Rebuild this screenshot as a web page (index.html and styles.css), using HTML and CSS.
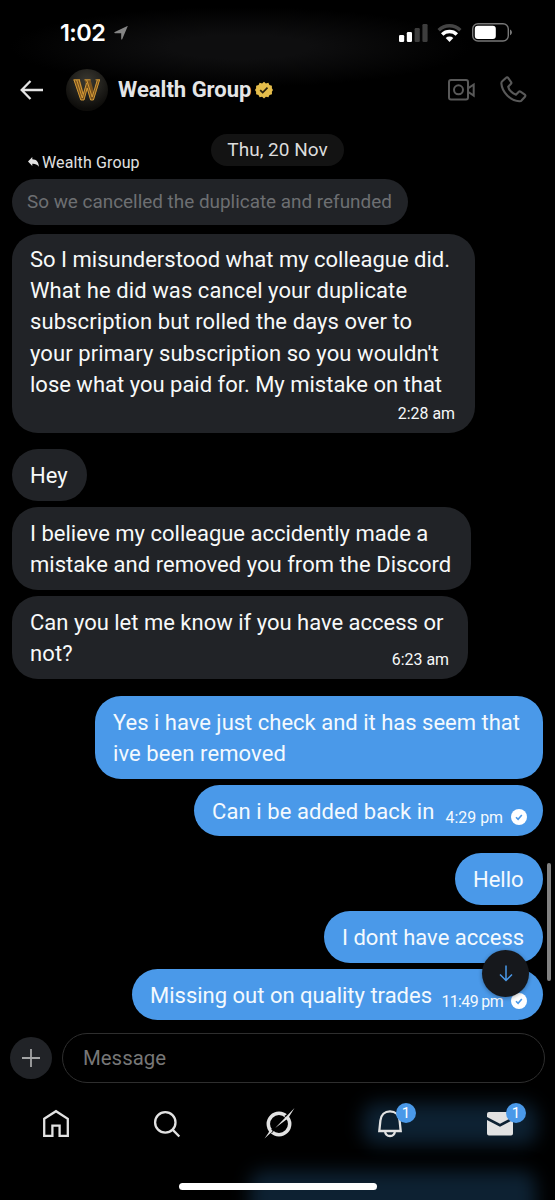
FILE: index.html
```html
<!DOCTYPE html>
<html lang="en">
<head>
<meta charset="utf-8">
<title>Wealth Group</title>
<link rel="stylesheet" href="styles.css">
</head>
<body>
<div class="phone">
  <header class="top">
    <div class="status">
      <span class="clock">1:02</span>
      <svg class="loc" width="14" height="14" viewBox="0 0 14 14"><path d="M13.6.5 8.2 13.2c-.3.500-1 .4-1-.3V7.2H1c-.8 0-.9-.8-.2-1.1L12.900.2c.5-.2.9-.1.700.3z" fill="#858585"/></svg>
      <svg class="signal" width="30" height="18" viewBox="0 0 30 18"><rect x="0" y="11" width="5.200" height="7" rx="1.300" fill="#fff"/><rect x="7.800" y="8" width="5.200" height="10" rx="1.300" fill="#fff"/><rect x="15.600" y="4" width="5.200" height="14" rx="1.300" fill="#3d3d3d"/><rect x="23.400" y="0" width="5.200" height="18" rx="1.300" fill="#3d3d3d"/></svg>
      <svg class="wifi" width="25" height="18" viewBox="0 0 25 18"><path d="M1.700 6.200a15.500 15.500 0 0 1 21.600 0" fill="none" stroke="#444" stroke-width="3.500"/><path d="M5.200 10.400a10.500 10.500 0 0 1 14.600 0" fill="none" stroke="#fff" stroke-width="3.500"/><path d="M12.500 18 8.700 14.100a5.600 5.600 0 0 1 7.600 0z" fill="#fff"/></svg>
      <svg class="battery" width="41" height="19" viewBox="0 0 41 19"><rect x=".7" y=".7" width="35.600" height="17.300" rx="5.300" fill="none" stroke="#777" stroke-width="1.400"/><rect x="2.800" y="2.700" width="21" height="13.200" rx="3" fill="#fff"/><path d="M38 6.500c2.600 1 2.600 4.800 0 5.800z" fill="#777"/></svg>
    </div>
    <div class="title-bar">
      <svg class="back" width="24" height="20" viewBox="0 0 24 20" fill="none" stroke="#e4e4e4" stroke-width="2.300"><path d="M23 10H2M10.500 1 1.700 10l8.800 9"/></svg>
      <svg class="avatar" width="42" height="42" viewBox="0 0 42 42">
        <defs><radialGradient id="av" cx=".5" cy=".3" r=".65"><stop offset="0" stop-color="#3b3932"/><stop offset=".55" stop-color="#22211d"/><stop offset="1" stop-color="#0d0c0a"/></radialGradient></defs>
        <circle cx="21" cy="21" r="21" fill="url(#av)"/>
        <path d="M7.500 10.500h6.500l3.500 13 2.500-8-1.500-5h6l3.500 13 3-13h3L27.700 31h-3.200L21 20.500 18 31h-3.200z" fill="#7a521c"/>
        <g fill="none" stroke="#dca23a" stroke-width=".9"><path d="M7.500 10.800H14M18.500 10.800h6M29.500 10.800H34"/><path d="m8 11 6.800 20H18l3.200-12 3.400 12h2.800L33.500 11"/><path d="m10.700 11 5.600 18 4.200-15M31.300 11l-5.100 17-5.500-17"/><path d="m13.200 11 3.800 14"/></g>
      </svg>
      <h1 class="name">Wealth Group</h1>
      <svg class="verified" width="18" height="18" viewBox="0 0 18 18"><path d="m9 .7 1.900 1.700 2.500-.6 1 2.300 2.500.6v2.600L18 9l-1.100 1.800.1 2.500-2.500.7-1.100 2.300-2.500-.6L9 17.400l-1.900-1.700-2.500.6-1.100-2.300-2.400-.7V10.800L0 9l1.100-1.700V4.700l2.500-.6 1-2.300 2.500.6z" fill="#e5bd4b"/><path d="m5.200 9.100 2.500 2.500 4.800-5" fill="none" stroke="#28200c" stroke-width="1.700"/></svg>
      <svg class="video" width="27" height="22" viewBox="0 0 27 22" fill="none" stroke="#595959" stroke-width="2"><rect x="1" y="1" width="19" height="19.500" rx="2"/><circle cx="10.500" cy="10.800" r="4.500"/><path d="M20 9.300 25.700 5.500v11.200L20 12.800z"/></svg>
      <svg class="call" width="27" height="27" viewBox="0 0 27 27" fill="none" stroke="#595959" stroke-width="2.100" stroke-linejoin="round"><path d="M2.200 5.300 6.100 1.700c.6-.6 1.500-.5 2 .2l3 4.200c.4.600.4 1.200-.1 1.700L8.200 10.700c.6 3.200 4.300 7 7.700 8l2.900-2.900c.5-.5 1.100-.5 1.700-.1l4.300 3c.7.500.8 1.400.2 2l-3.300 3.600c-.6.800-1.500 1-2.500.9C10.500 25 2 16 1.400 7.700c-.1-1 .1-1.800.8-2.400z"/></svg>
    </div>
  </header>

  <main class="thread">
    <div class="meta">
      <div class="reply"><svg width="11" height="10" viewBox="0 0 11 10"><path d="M4.300 0v2.300C8.500 2.300 10.600 5 10.900 9.800 9 7.300 7.300 6.700 4.300 6.800V9L0 4.500z" fill="#e1e1e1"/></svg><span>Wealth Group</span></div>
      <div class="date">Thu, 20 Nov</div>
    </div>
    <div class="quote">So we cancelled the duplicate and refunded</div>
    <div class="bubble in b-long"><p><span>So I misunderstood what my colleague did.</span><span class="wide">What he did was cancel your duplicate</span><span class="wide">subscription but rolled the days over to</span><span class="wide">your primary subscription so you wouldn't</span><span>lose what you paid for. My mistake on that</span></p><time class="below">2:28 am</time></div>
    <div class="bubble in b-hey gap"><p>Hey</p></div>
    <div class="bubble in b-believe"><p><span>I believe my colleague accidently made a</span><span class="snug">mistake and removed you from the Discord</span></p></div>
    <div class="bubble in b-access"><p><span>Can you let me know if you have access or</span><span class="wide">not?</span></p><time class="corner">6:23 am</time></div>
    <div class="bubble out b-yes gap"><p><span>Yes i have just check and it has seem that</span><span class="wide">ive been removed</span></p></div>
    <div class="bubble out b-can row"><p class="wide">Can i be added back in</p><time>4:29 pm</time><svg class="tick" width="16" height="16" viewBox="0 0 16 16"><circle cx="8" cy="8" r="8" fill="#fff"/><path d="m5 8.200 2.100 2.100 3.700-4.400" fill="none" stroke="#4a99e9" stroke-width="1.600"/></svg></div>
    <div class="bubble out b-hello gap"><p>Hello</p></div>
    <div class="bubble out b-dont"><p>I dont have access</p></div>
    <div class="bubble out b-miss row"><p>Missing out on quality trades</p><time class="tight">11:49 pm</time><svg class="tick" width="16" height="16" viewBox="0 0 16 16"><circle cx="8" cy="8" r="8" fill="#fff"/><path d="m5 8.200 2.100 2.100 3.700-4.400" fill="none" stroke="#4a99e9" stroke-width="1.600"/></svg></div>
    <div class="scrollbar"></div>
    <div class="jump"><svg width="14" height="17" viewBox="0 0 14 17" fill="none" stroke="#4a99e9" stroke-width="1.500"><path d="M7 .5v15M1 9.500l6 6 6-6"/></svg></div>
  </main>

  <footer class="bottom">
    <div class="glow glow-tabs"></div>
    <div class="glow glow-edge"></div>
    <div class="composer">
      <div class="plus"><svg width="18" height="18" viewBox="0 0 18 18" stroke="#a4a5a6" stroke-width="1.800"><path d="M9 0v18M0 9h18"/></svg></div>
      <div class="field">Message</div>
    </div>
    <nav class="tabs">
      <div class="tab"><svg width="28" height="29" viewBox="0 0 28 29" fill="none" stroke="#e2e2e2" stroke-width="2.300"><path d="M2.200 9.800 14 2.200l11.800 7.600v17.100h-8.200v-10.300h-7.200v10.300H2.200z"/></svg></div>
      <div class="tab"><svg width="28" height="28" viewBox="0 0 28 28" fill="none" stroke="#e2e2e2" stroke-width="2.300"><circle cx="12.300" cy="12.400" r="10.200"/><path d="m19.300 19.400 7 7.100"/></svg></div>
      <div class="tab nudge"><svg width="32" height="32" viewBox="0 0 32 32"><circle cx="16" cy="16" r="10.700" fill="none" stroke="#e2e2e2" stroke-width="3.500"/><path d="m26 4.500-5.500 5L9.500 20.800 12 21.600 9 25l-2.500-1.500L11 18.500z" fill="#000"/><path d="M30 1.500 21.500 8l2 2z" fill="#000"/><path d="M31.500 0 12.200 20l11.300-8.500 2.500-2.500C27.500 6 29 4 31.500 0zM1.500 30.500 9.800 23 7.200 20.500 5.500 24.800C4.300 26.800 3 28.500 1.500 30.500z" fill="#e2e2e2"/></svg></div>
      <div class="tab nudge"><svg width="28" height="29" viewBox="0 0 28 29" fill="none" stroke="#e2e2e2" stroke-width="2.300"><path d="M3.300 22 4.400 11.500C5 6 8.700 2.400 14 2.400s9 3.600 9.600 9.100L24.700 22z"/><path d="M9 22c.3 3 2.200 5 5 5s4.700-2 5-5"/></svg><b class="badge">1</b></div>
      <div class="tab"><svg width="28" height="26" viewBox="0 0 28 26" fill="#e2e2e2"><path d="M3 1h22a2 2 0 0 1 2 2v3L14 12.700 1 6V3a2 2 0 0 1 2-2z"/><path d="M1 9 14 15.800 27 9v13.500a2 2 0 0 1-2 2H3a2 2 0 0 1-2-2z"/></svg><b class="badge">1</b></div>
    </nav>
    <div class="home-bar"></div>
  </footer>
</div>
</body>
</html>
```
FILE: styles.css
```css
* { box-sizing: border-box; }
body { margin: 0; background: #000; }
.phone {
  width: 555px; height: 1200px; overflow: hidden;
  display: flex; flex-direction: column;
  background: #000; color: #f7f9f9;
  font-family: Roboto, "Liberation Sans", sans-serif;
}
svg { display: block; flex: none; }

.top { height: 120px; flex: none; background: radial-gradient(ellipse 230px 40px at 240px 47px, #0e0e0f 0 30%, #000 100%); }
.status { height: 66px; display: flex; align-items: center; padding-left: 60px; }
.clock { width: 54px; font: 600 23.500px/28px Inter, sans-serif; letter-spacing: -.6px; color: #fff; }
.signal { margin-left: 271px; }
.wifi { margin-left: 8px; }
.battery { margin-left: 10px; margin-top: -1px; }
.title-bar { height: 47px; display: flex; align-items: center; padding-left: 20px; }
.avatar { margin-left: 22px; }
.name { margin: 0 0 0 10px; width: 135px; white-space: nowrap; font-size: 22px; line-height: 28px; font-weight: 700; color: #e4e5e6; }
.verified { margin-left: 2px; }
.video { margin-left: 175px; }
.call { margin-left: 25px; }

.thread { position: relative; height: 901px; flex: none; padding: 14px 12px 0; display: flex; flex-direction: column; align-items: flex-start; }
.meta { width: 100%; height: 45px; flex: none; display: grid; grid-template-columns: 199px 133px 1fr; }
.reply { display: flex; align-items: center; gap: 3px; height: 20px; margin: 18px 0 0 16px; font-size: 16px; letter-spacing: .13px; color: #e1e1e1; }
.date { height: 32px; border-radius: 16px; background: #131313; color: #dcdcdc; font-size: 19px; line-height: 31px; text-align: center; }
.quote { width: 396px; height: 46px; flex: none; margin-bottom: 9px; padding-left: 15px; border-radius: 23px; background: #212327; color: #6d6f72; font-size: 18.900px; line-height: 46px; white-space: nowrap; }
.bubble { position: relative; flex: none; margin-bottom: 6px; padding: 11px 18px 0; border-radius: 26px; font-size: 22px; line-height: 31.100px; white-space: nowrap; }
.bubble p { margin: 0; }
.bubble p span { display: block; }
.wide { letter-spacing: .09px; }
.snug { letter-spacing: .04px; }
.bubble time { font-size: 15.900px; line-height: 20px; }
.bubble .tight { letter-spacing: -.6px; }
.gap { margin-top: 10.300px; }
.out.gap { margin-top: 10.600px; }
.in { background: #212327; }
.out { align-self: flex-end; background: #4a99e9; color: #f4f9fe; }
.b-long { width: 463px; height: 199px; padding-top: 10.300px; }
.b-hey { width: 75px; height: 51.800px; }
.b-believe { width: 459px; height: 83px; }
.b-access { width: 456px; height: 83px; }
.b-yes { width: 448px; height: 83px; }
.b-can { width: 349px; height: 51.800px; }
.b-hello { width: 88px; height: 51.800px; }
.b-dont { width: 219px; height: 51.800px; }
.b-miss { width: 411px; height: 51.800px; }
.below { display: block; margin: 4px 2px 0 0; text-align: right; }
.corner { position: absolute; right: 19px; bottom: 9px; }
.row { display: flex; padding-right: 16.500px; }
.row time { margin: 12px 0 0 auto; }
.tick { margin: 13px 0 0 7.500px; }
.scrollbar { position: absolute; right: 4px; top: 743px; width: 4px; height: 118px; border-radius: 2px; background: #828282; }
.jump { position: absolute; left: 482px; top: 830px; width: 47px; height: 47px; border-radius: 50%; background: #16181c; display: grid; place-items: center; box-shadow: 0 1px 4px #0005; }

.bottom { position: relative; overflow: hidden; flex: 1; padding-top: 12px; display: flex; flex-direction: column; }
.glow { position: absolute; background: #0d2132; filter: blur(9px); }
.glow-tabs { left: 363px; top: 82px; width: 174px; height: 42px; border-radius: 14px; }
.glow-edge { left: 250px; top: 150px; width: 286px; height: 70px; border-radius: 14px; }
.composer { position: relative; display: flex; align-items: center; height: 50px; padding: 0 10px; }
.plus { width: 42px; height: 42px; flex: none; border-radius: 50%; background: #212327; display: grid; place-items: center; }
.field { margin-left: 10px; width: 483px; height: 50px; border: 1px solid #2e2e2e; border-radius: 25px; padding-left: 20px; font-size: 20.400px; line-height: 49px; color: #777; }
.tabs { position: relative; display: grid; grid-template-columns: repeat(5, 111px); height: 81px; }
.tab { position: relative; display: grid; place-items: center; padding-left: 1px; }
.nudge { padding-left: 3px; }
.badge { position: absolute; left: 62px; top: 20px; width: 20px; height: 20px; border-radius: 50%; background: #4a99e9; color: #fff; font: 400 15px/20px Roboto, sans-serif; text-align: center; }
.nudge .badge { left: 63px; }
.home-bar { position: relative; width: 198px; height: 7px; margin: 19px 0 0 179px; border-radius: 4px; background: #fff; }
```
